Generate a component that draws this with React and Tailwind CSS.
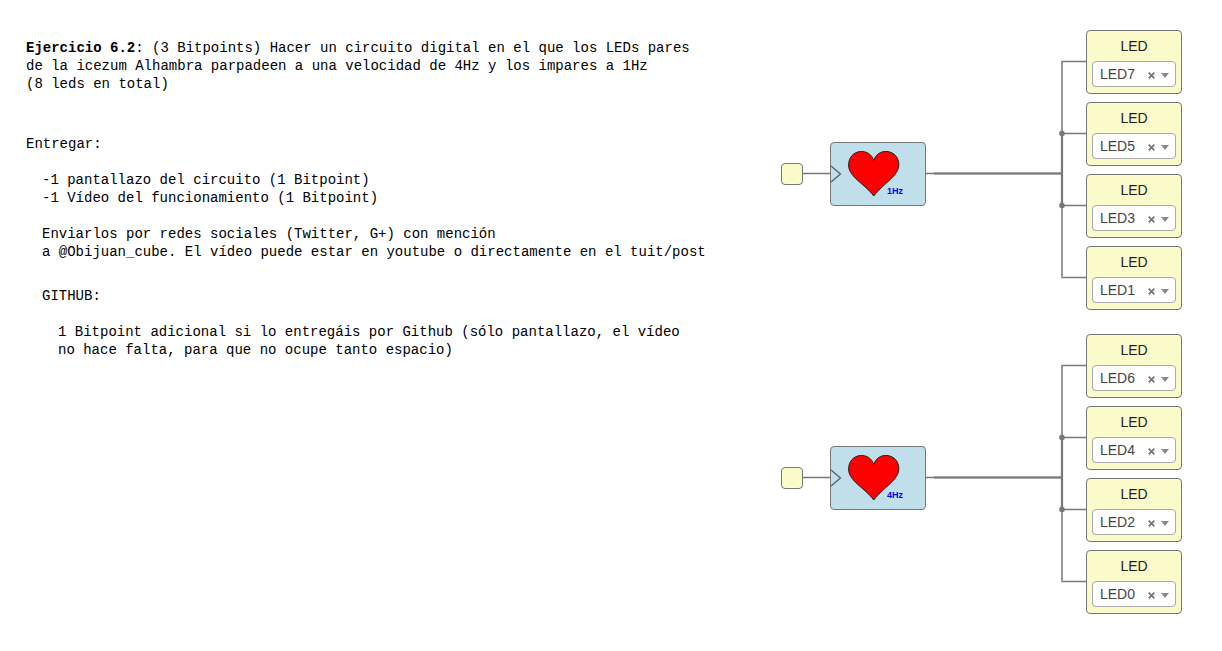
import React from "react";

const WIRE = "#777777";

function LedBlock({ name }) {
  return (
    <div className="h-16 w-24 rounded-[4px] border border-[#777] bg-[#fafacb] px-[5px] pt-[5px]">
      <label htmlFor={name} className="block text-center text-[14px] leading-5 text-[#222]">
        LED
      </label>
      <div className="mt-[5px] flex h-[26px] items-center rounded-[4px] border border-[#aaa] bg-white pr-[6px] pl-[7px]">
        <select
          id={name}
          defaultValue={name}
          className="h-full min-w-0 flex-1 appearance-none bg-transparent text-[14px] text-[#444] outline-none"
        >
          <option>{name}</option>
        </select>
        <button type="button" aria-label={`Clear ${name}`} className="mr-[6px] mt-[2px] flex">
          <svg width="7" height="7" viewBox="0 0 7 7" stroke="#777" strokeWidth="1.8">
            <path d="M0.7 0.7 6.3 6.3M6.3 0.7 0.7 6.3" />
          </svg>
        </button>
        <svg width="8" height="5" viewBox="0 0 8 5" className="mt-[2px]" fill="#888">
          <path d="M0 0H8L4 5Z" />
        </svg>
      </div>
    </div>
  );
}

function Circuit({ rate, leds }) {
  return (
    <section aria-label={rate} className="relative h-[280px] w-[401px]">
      <svg width="401" height="280" viewBox="0 0 401 280" className="absolute inset-0" fill="none" stroke={WIRE}>
        <path d="M22 143.500H49M145 143.500H281M280 31.500H305M280 247.500H305M281 103.500H305M281 175.500H305" strokeWidth="1.500" />
        <path d="M281 31V248" stroke="#999" strokeWidth="2" />
        <path d="M153 143.500H281M281 103.500V175.500" strokeWidth="2.200" />
        <circle cx="281" cy="103.500" r="2.800" fill={WIRE} stroke="none" />
        <circle cx="281" cy="175.500" r="2.800" fill={WIRE} stroke="none" />
      </svg>
      <div className="absolute top-[133px] left-0 size-[22px] rounded-[4px] border border-[#777] bg-[#fafacb]" />
      <div className="absolute top-28 left-[49px] h-16 w-24 rounded-[4px] border border-[#777] bg-[#c0dfeb]">
        <svg width="94" height="62" viewBox="0 0 94 62" fill="none">
          <path d="M0 23 9.500 31 0 39" stroke="#555" strokeWidth="1.200" />
          <path
            d="M42.700 17.500C45 11 50 8 56 8.500C63 9 68 14.500 67.800 22C67.500 33 54 39 42.700 53C34 41 17.500 34 17.600 22C17.600 14.500 22.500 9 29.500 8.500C35.500 8 41 11.500 42.700 17.500Z"
            fill="#f00"
            stroke="#222"
          />
          <text x="56" y="51" fill="#00f" className="font-['Liberation_Sans',sans-serif] text-[9px] font-bold">
            {rate}
          </text>
        </svg>
      </div>
      <div className="absolute top-0 left-[305px] flex flex-col gap-2">
        {leds.map((name) => (
          <LedBlock key={name} name={name} />
        ))}
      </div>
    </section>
  );
}

export default function App() {
  return (
    <main className="flex min-h-screen items-start justify-between bg-white pt-[30px] pr-10 pb-9 pl-[26px] font-['Liberation_Sans',Arial,sans-serif]">
      <article className="pt-[9px] font-['Liberation_Mono',monospace] text-[14px] leading-[18px] whitespace-pre text-black">
        <p>
          <b>Ejercicio 6.2</b>
          <span>: (3 Bitpoints) Hacer un circuito digital en el que los LEDs pares</span>
          <span className="block">de la icezum Alhambra parpadeen a una velocidad de 4Hz y los impares a 1Hz</span>
          <span className="block">(8 leds en total)</span>
        </p>
        <p className="mt-[42px]">Entregar:</p>
        <div className="pl-4">
          <p className="mt-[18px]">{"-1 pantallazo del circuito (1 Bitpoint)\n-1 Vídeo del funcionamiento (1 Bitpoint)"}</p>
          <p className="mt-[18px]">
            {"Enviarlos por redes sociales (Twitter, G+) con mención\na @Obijuan_cube. El vídeo puede estar en youtube o directamente en el tuit/post"}
          </p>
          <p className="mt-[26px]">GITHUB:</p>
          <p className="mt-[18px] pl-4">
            {"1 Bitpoint adicional si lo entregáis por Github (sólo pantallazo, el vídeo\nno hace falta, para que no ocupe tanto espacio)"}
          </p>
        </div>
      </article>
      <div className="flex shrink-0 flex-col gap-6">
        <Circuit rate="1Hz" leds={["LED7", "LED5", "LED3", "LED1"]} />
        <Circuit rate="4Hz" leds={["LED6", "LED4", "LED2", "LED0"]} />
      </div>
    </main>
  );
}
